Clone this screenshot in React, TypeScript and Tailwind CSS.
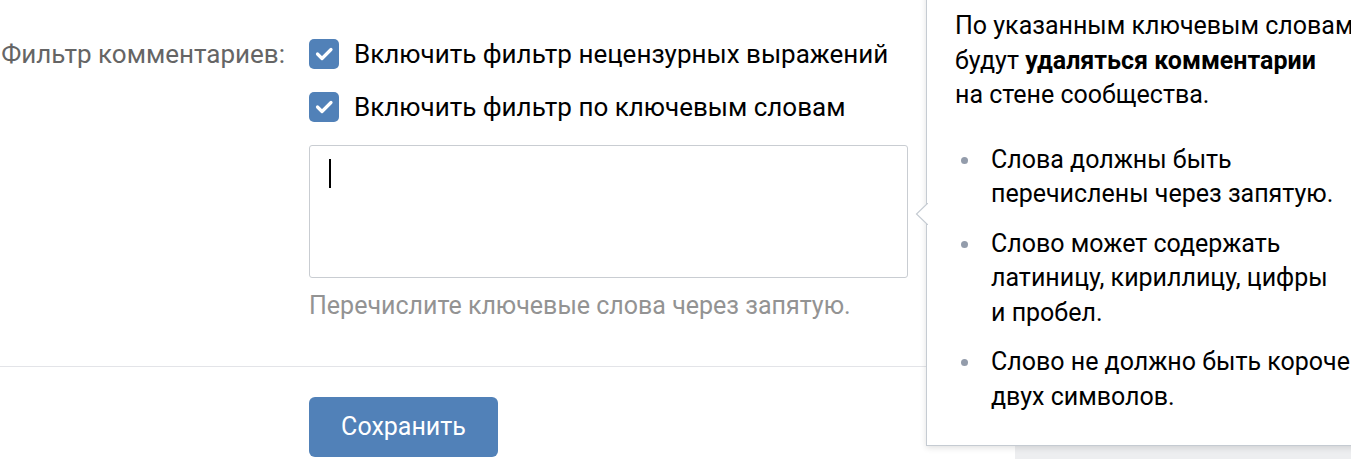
import React from "react";

function Checkbox() {
  return (
    <div className="w-[30px] h-[30px] rounded-[5px] bg-[#5181b8] flex items-center justify-center shrink-0">
      <svg width="30" height="30" viewBox="0 0 30 30" fill="none">
        <path d="M8.5 15 L13 19.5 L22 10.5" stroke="#fff" strokeWidth="3.2" strokeLinecap="round" strokeLinejoin="round" />
      </svg>
    </div>
  );
}

const bullets: string[][] = [
  ["Слова должны быть", "перечислены через запятую."],
  ["Слово может содержать", "латиницу, кириллицу, цифры", "и пробел."],
  ["Слово не должно быть короче", "двух символов."],
];

export default function App() {
  return (
    <div className="relative w-[1351px] h-[459px] overflow-hidden bg-[#edeef0] font-['Roboto','Noto_Sans',sans-serif] text-[25px] leading-[34.5px]">
      {/* page block */}
      <div className="w-[1015px] h-full bg-white pt-[39px]">
        <div className="grid grid-cols-[285px_1fr] gap-x-6">
          <div className="text-right text-[26px] text-[#656565] whitespace-nowrap h-[30px] flex items-center justify-end">
            Фильтр комментариев:
          </div>
          <div className="flex flex-col">
            <label className="flex items-center gap-[15px] h-[30px] text-[26px] text-black whitespace-nowrap">
              <Checkbox />
              <span>Включить фильтр нецензурных выражений</span>
            </label>
            <label className="flex items-center gap-[15px] h-[30px] mt-[23px] text-[26px] text-black whitespace-nowrap">
              <Checkbox />
              <span>Включить фильтр по ключевым словам</span>
            </label>
            <div className="mt-[23px] w-[599px] h-[133px] border border-[#c9cdd2] rounded-[3px] bg-white pl-[19px] pt-[13px]">
              <div className="w-[1.5px] h-[29px] bg-black" />
            </div>
            <div className="mt-[11px] text-[#939393] whitespace-nowrap">
              Перечислите ключевые слова через запятую.
            </div>
          </div>
        </div>

        <div className="mt-[42px] h-[1.5px] bg-[#e3e4e8]" />

        <div className="pl-[309px] pt-[30px]">
          <button className="w-[189px] h-[60px] rounded-[6px] bg-[#5181b8] text-white">
            Сохранить
          </button>
        </div>
      </div>

      {/* tooltip */}
      <div className="absolute left-[926px] top-[-30px] w-[470px] h-[476px] bg-white border border-[#c5cbd2] shadow-[0_2px_6px_rgba(0,0,0,0.12)] pl-[28px] pt-[38px] text-black whitespace-nowrap">
        <svg className="absolute left-[-12px] top-[232px]" width="13" height="22" viewBox="0 0 13 22">
          <path d="M13 0 L1.5 11 L13 22" fill="#fff" stroke="#c5cbd2" strokeWidth="1.2" />
        </svg>
        <p>
          По указанным ключевым словам
          <br />
          будут <b className="font-bold">удаляться комментарии</b>
          <br />
          на стене сообщества.
        </p>
        <ul className="mt-[30px] flex flex-col gap-[15px]">
          {bullets.map((lines, i) => (
            <li key={i} className="flex">
              <span className="w-[36px] shrink-0 flex items-start">
                <span className="mt-[14px] ml-[6px] w-[7px] h-[7px] rounded-full bg-[#939cab]" />
              </span>
              <span>
                {lines.map((l, j) => (
                  <React.Fragment key={j}>
                    {j > 0 && <br />}
                    {l}
                  </React.Fragment>
                ))}
              </span>
            </li>
          ))}
        </ul>
      </div>
    </div>
  );
}
